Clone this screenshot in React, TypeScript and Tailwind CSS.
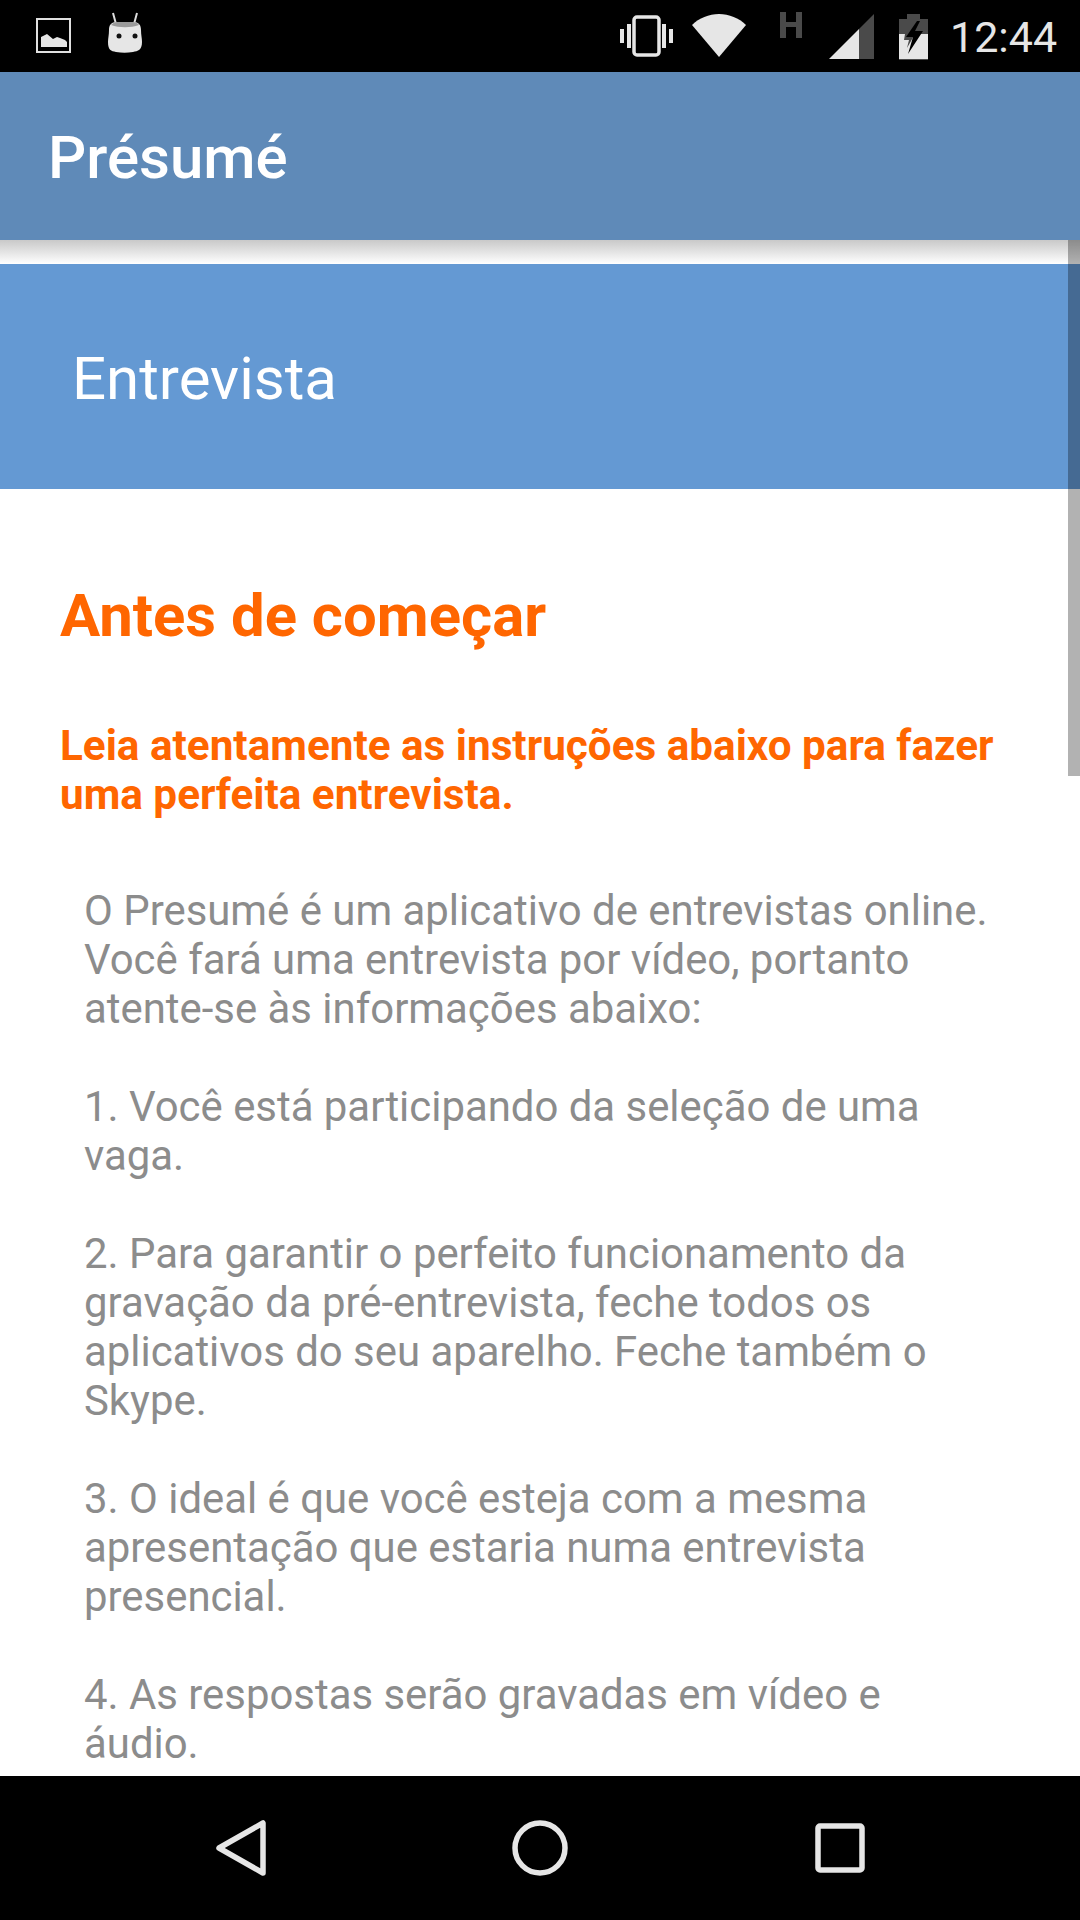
const body = [
  "O Presumé é um aplicativo de entrevistas online.\nVocê fará uma entrevista por vídeo, portanto\natente-se às informações abaixo:",
  "1. Você está participando da seleção de uma\nvaga.",
  "2. Para garantir o perfeito funcionamento da\ngravação da pré-entrevista, feche todos os\naplicativos do seu aparelho. Feche também o\nSkype.",
  "3. O ideal é que você esteja com a mesma\napresentação que estaria numa entrevista\npresencial.",
  "4. As respostas serão gravadas em vídeo e\náudio.",
];

function StatusBar() {
  return (
    <div className="relative h-[72px] shrink-0 bg-black text-[#e6e6e6]">
      <svg className="absolute left-[36px] top-[18px]" width="36" height="36" viewBox="0 0 36 36">
        <rect x="1" y="1" width="33" height="33" fill="none" stroke="#e0e0e0" strokeWidth="2" />
        <path d="M5 29V19l6-3 6 5 4-2 3 1 5 2 2 2v5z" fill="#e6e6e6" />
      </svg>
      <svg className="absolute left-[106px] top-[10px]" width="40" height="46" viewBox="0 0 40 46">
        <path d="M10 14 7 3M28 14 31 3" stroke="#ddd" strokeWidth="2" />
        <path d="M3 20c0-5 2-8 8-8h16c6 0 8 3 8 8 0 5 1 8 1 12 0 8-4 9-9 10-6 1-11 1-17 0-5-1-8-2-8-10 0-4 1-7 1-12z" fill="#e6e6e6" />
        <path d="M5 15c2-2 4-3 6-3h16c2 0 5 1 6 3-8 3-20 3-28 0z" fill="#9a9a9a" />
        <circle cx="13" cy="26" r="2.5" fill="#111" />
        <circle cx="30" cy="26" r="2.5" fill="#111" transform="translate(-1)" />
      </svg>
      <svg className="absolute left-[619px] top-[14px]" width="56" height="44" viewBox="0 0 56 44">
        <rect x="15" y="3" width="25" height="38" rx="3" fill="none" stroke="#e6e6e6" strokeWidth="3.5" />
        <rect x="1" y="15" width="4" height="14" fill="#e6e6e6" />
        <rect x="8" y="10" width="4" height="24" fill="#e6e6e6" />
        <rect x="43" y="10" width="4" height="24" fill="#e6e6e6" />
        <rect x="50" y="15" width="4" height="14" fill="#e6e6e6" />
      </svg>
      <svg className="absolute left-[691px] top-[14px]" width="56" height="44" viewBox="0 0 56 44">
        <path d="M1 11C8 4 18 0 28 0s20 4 27 11L28 43z" fill="#e6e6e6" />
      </svg>
      <svg className="absolute left-[779px] top-[12px]" width="26" height="28" viewBox="0 0 26 28">
        <path d="M1 0h6v10h10V0h6v26h-6V15H7v11H1z" fill="#4a4a4a" />
      </svg>
      <svg className="absolute left-[829px] top-[14px]" width="46" height="46" viewBox="0 0 46 46">
        <path d="M0 45 30 15v30z" fill="#e6e6e6" />
        <path d="M30 15 45 0v45H30z" fill="#4a4a4a" />
      </svg>
      <svg className="absolute left-[899px] top-[14px]" width="30" height="46" viewBox="0 0 30 46">
        <path d="M0 5h8V0h13v5h8v47H0z" fill="#4a4a4a" />
        <path d="M0 20h6l-1 6h5l-2 8 8-14h13v25H0z" fill="#e6e6e6" />
        <path d="M18 7 7 23h7l-5 17 15-23h-8l5-10z" fill="#000" />
      </svg>
      <div className="absolute left-[950px] top-[13px] font-['Roboto',sans-serif] text-[43px] leading-[48px] text-[#e6e6e6]">12:44</div>
    </div>
  );
}

function NavBar() {
  return (
    <div className="relative h-[144px] shrink-0 bg-black">
      <svg className="absolute left-[214px] top-[42px]" width="54" height="60" viewBox="0 0 54 60">
        <path d="M49 5v50L5 30z" fill="none" stroke="#e6e6e6" strokeWidth="5.5" strokeLinejoin="round" />
      </svg>
      <svg className="absolute left-[510px] top-[42px]" width="60" height="60" viewBox="0 0 60 60">
        <circle cx="30" cy="30" r="25" fill="none" stroke="#e6e6e6" strokeWidth="5.5" />
      </svg>
      <svg className="absolute left-[812px] top-[44px]" width="56" height="56" viewBox="0 0 56 56">
        <rect x="6" y="6" width="44" height="44" rx="2" fill="none" stroke="#e6e6e6" strokeWidth="5.5" />
      </svg>
    </div>
  );
}

export default function App() {
  return (
    <div className="relative flex h-[1920px] w-[1080px] flex-col overflow-hidden bg-white font-['Roboto',sans-serif]">
      <StatusBar />
      <div className="flex h-[168px] shrink-0 items-center bg-[#5f8ab8] pb-[0px] pl-[48px] pt-[4px] text-[60px] font-medium text-white">
        Présumé
      </div>
      <main className="relative min-h-0 flex-1 overflow-hidden">
        <div className="h-[24px] bg-gradient-to-b from-[#c9c9c9] to-white" />
        <div className="flex h-[225px] items-center bg-[#6499d3] pl-[72px] pt-[5px] text-[60px] text-white">Entrevista</div>
        <div className="px-[60px] pt-[95px]">
          <h1 className="text-[59.85px] font-bold leading-[64px] text-[#ff6600]">Antes de começar</h1>
          <p className="mt-[73px] text-[42.25px] font-bold leading-[49px] text-[#ff6600]">
            Leia atentamente as instruções abaixo para fazer
            <br />
            uma perfeita entrevista.
          </p>
          <div className="mt-[67px] flex flex-col gap-[49px] pl-[24px] text-[41.9px] leading-[49px] text-[#8c8c8c]">
            {body.map((t, i) => (
              <p key={i} className="whitespace-pre-line">{t}</p>
            ))}
          </div>
        </div>
        <div className="absolute right-0 top-0 h-[536px] w-[12px] bg-black/30" />
      </main>
      <NavBar />
    </div>
  );
}
